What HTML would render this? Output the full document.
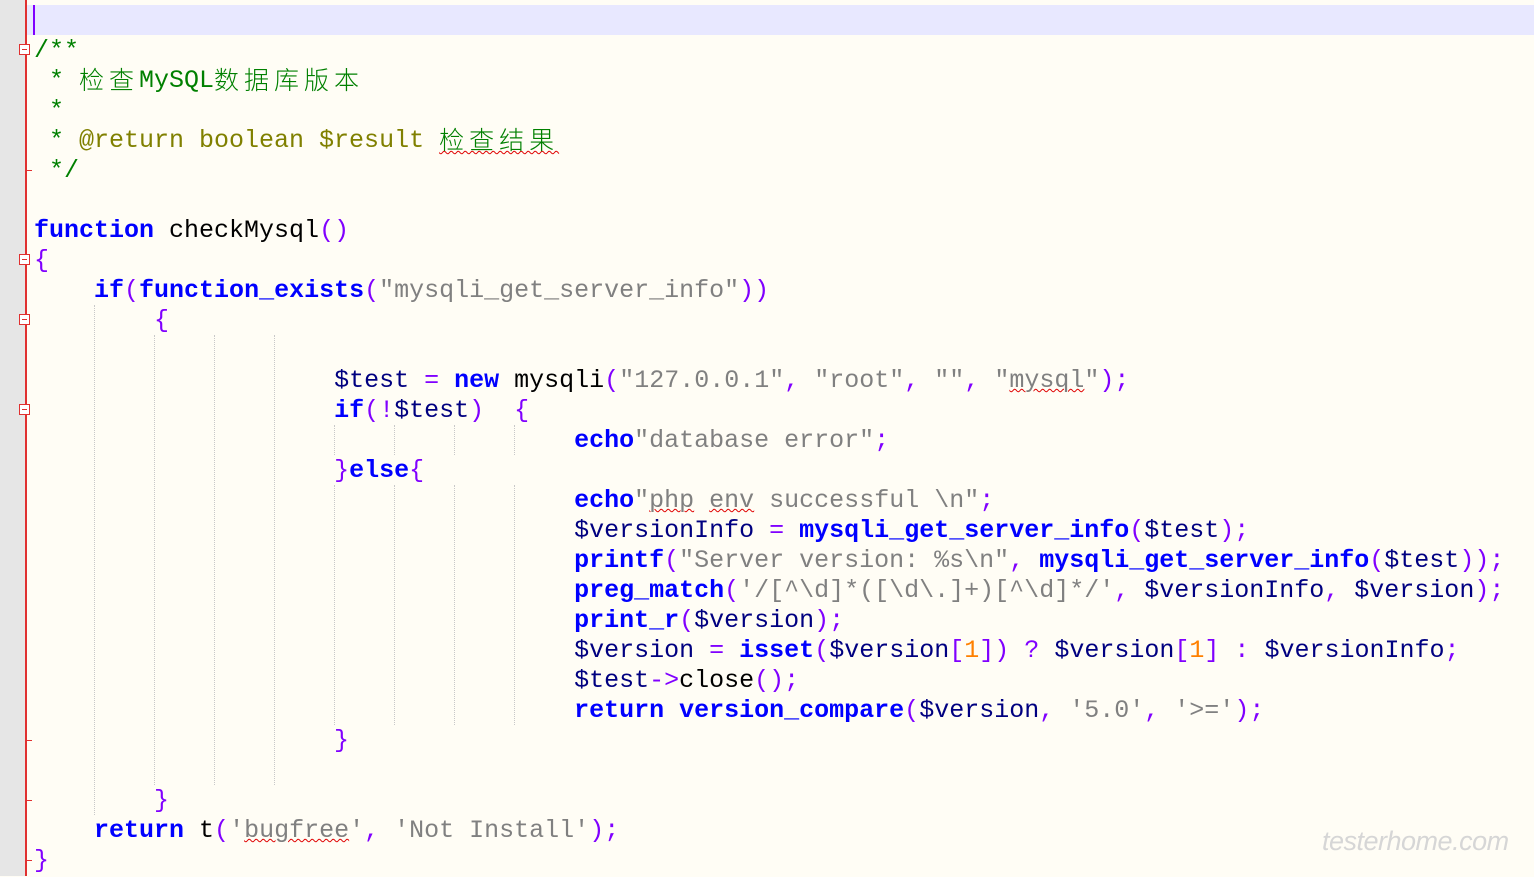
<!DOCTYPE html>
<html><head><meta charset="utf-8"><style>
html,body{margin:0;padding:0}
body{width:1534px;height:876px;overflow:hidden;background:#fffdf5;position:relative;font-family:"Liberation Mono","Noto Sans CJK SC",monospace;font-size:25px}
.gut{position:absolute;left:0;top:0;width:25px;height:876px;background:#e6e6e6}
.red{position:absolute;left:25px;top:0;width:2px;height:876px;background:#e03030}
.hl{position:absolute;left:27px;top:5px;width:1507px;height:30px;background:#e8e8ff}
.car{position:absolute;left:33px;top:5px;width:2px;height:30px;background:#8000ff}
.l{position:absolute;left:34px;height:30px;line-height:32px;white-space:pre;color:#000}
.k{color:#0000ff;font-weight:bold}
.p{color:#8000ff}
.s{color:#808080}
.v{color:#000080}
.c{color:#008000}
.d{color:#808000}
.n{color:#ff8000}
.cj{letter-spacing:5px;font-family:"Noto Sans CJK SC",sans-serif;font-weight:300;line-height:20px;display:inline-block;vertical-align:-2px}
.u{text-decoration:underline wavy #e00000;text-decoration-thickness:1px}
.fold{position:absolute;left:19px;width:9px;height:9px;border:1px solid #e03030;background:#fff}
.fold:after{content:"";position:absolute;left:2px;top:4px;width:5px;height:1px;background:#e03030}
.tick{position:absolute;left:26px;width:6px;height:1px;background:#e03030}
.g{position:absolute;width:0;border-left:1px dotted #c8c8c8}
.wm{position:absolute;left:1322px;top:826px;font-family:"Liberation Sans",sans-serif;font-style:italic;font-size:27px;color:#d6d6d6;letter-spacing:-0.5px}
</style></head><body>
<div class="gut"></div><div class="red"></div><div class="hl"></div><div class="car"></div>
<div class="fold" style="top:44px"></div>
<div class="fold" style="top:254px"></div>
<div class="fold" style="top:314px"></div>
<div class="fold" style="top:404px"></div>
<div class="tick" style="top:170px"></div>
<div class="tick" style="top:740px"></div>
<div class="tick" style="top:800px"></div>
<div class="tick" style="top:860px"></div>

<div class="g" style="left:94px;top:305px;height:510px"></div>
<div class="g" style="left:154px;top:335px;height:450px"></div>
<div class="g" style="left:214px;top:335px;height:450px"></div>
<div class="g" style="left:274px;top:335px;height:450px"></div>
<div class="g" style="left:334px;top:425px;height:30px"></div>
<div class="g" style="left:394px;top:425px;height:30px"></div>
<div class="g" style="left:454px;top:425px;height:30px"></div>
<div class="g" style="left:514px;top:425px;height:30px"></div>
<div class="g" style="left:334px;top:485px;height:240px"></div>
<div class="g" style="left:394px;top:485px;height:240px"></div>
<div class="g" style="left:454px;top:485px;height:240px"></div>
<div class="g" style="left:514px;top:485px;height:240px"></div>

<div class="l c" style="top:35px">/**</div>
<div class="l c" style="top:65px"> * <span class="cj">检查</span>MySQL<span class="cj">数据库版本</span></div>
<div class="l c" style="top:95px"> *</div>
<div class="l c" style="top:125px"> * <span class="d">@return boolean $result</span> <span class="u cj">检查结果</span></div>
<div class="l c" style="top:155px"> */</div>
<div class="l" style="top:215px"><span class="k">function</span> checkMysql<span class="p">()</span></div>
<div class="l p" style="top:245px">{</div>
<div class="l" style="top:275px">    <span class="k">if</span><span class="p">(</span><span class="k">function_exists</span><span class="p">(</span><span class="s">"mysqli_get_server_info"</span><span class="p">))</span></div>
<div class="l p" style="top:305px">        {</div>
<div class="l" style="top:365px">                    <span class="v">$test</span> <span class="p">=</span> <span class="k">new</span> mysqli<span class="p">(</span><span class="s">"127.0.0.1"</span><span class="p">,</span> <span class="s">"root"</span><span class="p">,</span> <span class="s">""</span><span class="p">,</span> <span class="s">"<span class="u">mysql</span>"</span><span class="p">);</span></div>
<div class="l" style="top:395px">                    <span class="k">if</span><span class="p">(!</span><span class="v">$test</span><span class="p">)</span>  <span class="p">{</span></div>
<div class="l" style="top:425px">                                    <span class="k">echo</span><span class="s">"database error"</span><span class="p">;</span></div>
<div class="l" style="top:455px">                    <span class="p">}</span><span class="k">else</span><span class="p">{</span></div>
<div class="l" style="top:485px">                                    <span class="k">echo</span><span class="s">"<span class="u">php</span> <span class="u">env</span> successful \n"</span><span class="p">;</span></div>
<div class="l" style="top:515px">                                    <span class="v">$versionInfo</span> <span class="p">=</span> <span class="k">mysqli_get_server_info</span><span class="p">(</span><span class="v">$test</span><span class="p">);</span></div>
<div class="l" style="top:545px">                                    <span class="k">printf</span><span class="p">(</span><span class="s">"Server version: %s\n"</span><span class="p">,</span> <span class="k">mysqli_get_server_info</span><span class="p">(</span><span class="v">$test</span><span class="p">));</span></div>
<div class="l" style="top:575px">                                    <span class="k">preg_match</span><span class="p">(</span><span class="s">'/[^\d]*([\d\.]+)[^\d]*/'</span><span class="p">,</span> <span class="v">$versionInfo</span><span class="p">,</span> <span class="v">$version</span><span class="p">);</span></div>
<div class="l" style="top:605px">                                    <span class="k">print_r</span><span class="p">(</span><span class="v">$version</span><span class="p">);</span></div>
<div class="l" style="top:635px">                                    <span class="v">$version</span> <span class="p">=</span> <span class="k">isset</span><span class="p">(</span><span class="v">$version</span><span class="p">[</span><span class="n">1</span><span class="p">])</span> <span class="p">?</span> <span class="v">$version</span><span class="p">[</span><span class="n">1</span><span class="p">]</span> <span class="p">:</span> <span class="v">$versionInfo</span><span class="p">;</span></div>
<div class="l" style="top:665px">                                    <span class="v">$test</span><span class="p">-&gt;</span>close<span class="p">();</span></div>
<div class="l" style="top:695px">                                    <span class="k">return</span> <span class="k">version_compare</span><span class="p">(</span><span class="v">$version</span><span class="p">,</span> <span class="s">'5.0'</span><span class="p">,</span> <span class="s">'&gt;='</span><span class="p">);</span></div>
<div class="l p" style="top:725px">                    }</div>
<div class="l p" style="top:785px">        }</div>
<div class="l" style="top:815px">    <span class="k">return</span> t<span class="p">(</span><span class="s">'<span class="u">bugfree</span>'</span><span class="p">,</span> <span class="s">'Not Install'</span><span class="p">);</span></div>
<div class="l p" style="top:845px">}</div>
<div class="wm">testerhome.com</div>
</body></html>
